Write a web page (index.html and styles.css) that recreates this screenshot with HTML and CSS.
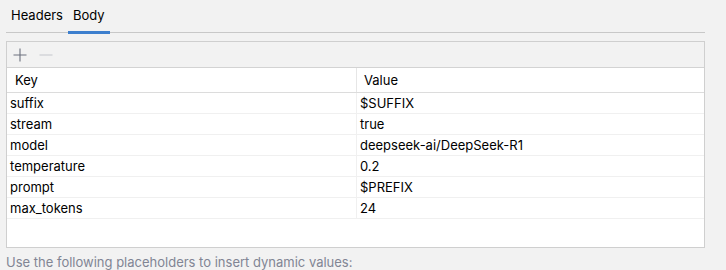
FILE: index.html
```html
<!DOCTYPE html>
<html>
<head>
<meta charset="utf-8">
<link rel="stylesheet" href="styles.css">
</head>
<body>
<div class="page">
  <div class="tabs">
    <div class="tab">Headers</div>
    <div class="tab active">Body</div>
  </div>
  <div class="panel">
    <div class="toolbar">
      <svg class="ico" width="14" height="14" viewBox="0 0 14 14"><path d="M7 0.5v13M0.5 7h13" stroke="#6c707e" stroke-width="1.1" fill="none"/></svg>
      <svg class="ico" width="14" height="14" viewBox="0 0 14 14"><path d="M0.5 7h13" stroke="#c9cbd0" stroke-width="1.1" fill="none"/></svg>
    </div>
    <div class="table">
      <div class="thead">
        <div class="th key">Key</div>
        <div class="th val">Value</div>
      </div>
      <div class="row"><div class="c key">suffix</div><div class="c val">$SUFFIX</div></div>
      <div class="row"><div class="c key">stream</div><div class="c val">true</div></div>
      <div class="row"><div class="c key">model</div><div class="c val">deepseek-ai/DeepSeek-R1</div></div>
      <div class="row"><div class="c key">temperature</div><div class="c val">0.2</div></div>
      <div class="row"><div class="c key">prompt</div><div class="c val">$PREFIX</div></div>
      <div class="row"><div class="c key">max_tokens</div><div class="c val">24</div></div>
    </div>
  </div>
  <div class="hint">Use the following placeholders to insert dynamic values:</div>
</div>
</body>
</html>
```
FILE: styles.css
```css
html, body {
  margin: 0;
  padding: 0;
  background: #f2f2f2;
}
body {
  font-family: Inter, "Noto Sans", sans-serif;
  font-size: 13px;
  color: #000;
  width: 726px;
  height: 270px;
  overflow: hidden;
}
.page {
  padding: 0 21px 0 6px;
}
.tabs {
  display: flex;
  height: 33px;
  border-bottom: 1px solid #c8c8c8;
  box-sizing: border-box;
  padding-left: 5px;
}
.tab {
  padding: 7px 0 0;
  height: 33px;
  box-sizing: border-box;
  margin-right: 10px;
  line-height: 17px;
}
.tab.active {
  position: relative;
  padding: 7px 5px 0;
  margin-left: -5px;
}
.tab.active::after {
  content: "";
  position: absolute;
  left: 0;
  right: 0;
  bottom: -1px;
  height: 3px;
  background: #3d7fce;
}
.panel {
  margin-top: 8px;
  border: 1px solid #cfcfcf;
  background: #fff;
  height: 207px;
  box-sizing: border-box;
}
.toolbar {
  height: 25px;
  background: #f2f2f2;
  border-bottom: 1px solid #d3d3d3;
  display: flex;
  align-items: center;
  gap: 12px;
  padding-left: 6px;
}
.ico { display: block; }
.thead {
  display: flex;
  height: 24px;
  border-bottom: 1px solid #dcdcdc;
  align-items: center;
}
.th, .c {
  box-sizing: border-box;
}
.key { width: 349px; padding-left: 8px; }
.th.val { border-left: 1px solid #e6e6e6; padding-left: 7px; height: 24px; line-height: 24px; }
.row {
  display: flex;
  height: 21px;
  box-sizing: border-box;
  border-bottom: 1px solid #f0f0f0;
  line-height: 20px;
}
.row .c.key { padding-left: 3px; }
.row .c.val { border-left: 1px solid #f0f0f0; padding-left: 3px; }
.hint {
  color: #818594;
  margin-top: 6px;
  font-size: 13px;
}
```
